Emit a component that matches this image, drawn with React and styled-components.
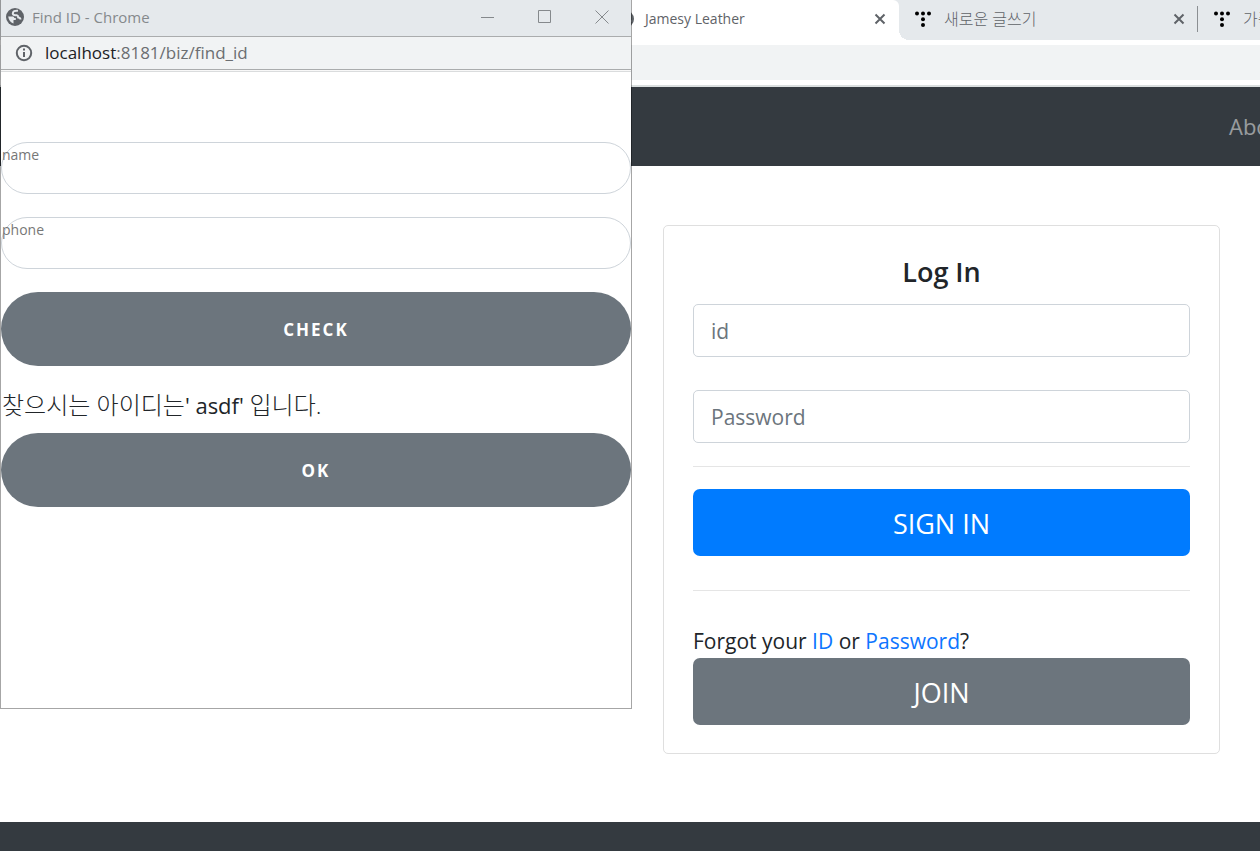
import styled, { createGlobalStyle } from 'styled-components';

const GlobalStyle = createGlobalStyle`
  *, *::before, *::after {
    box-sizing: border-box;
  }
  body {
    margin: 0;
    background: #fff;
    color: #212529;
    font-family: 'Open Sans', 'Noto Sans CJK KR', sans-serif;
    font-size: 21px;
    line-height: 33px;
  }
  button, input {
    font-family: inherit;
  }
  a {
    color: #0d75ff;
    text-decoration: none;
  }
`;

const Desktop = styled.div`
  position: relative;
  min-height: 100vh;
  overflow: hidden;
  display: flex;
  flex-direction: column;
`;

const TabStrip = styled.div`
  height: 40px;
  padding-left: 600px;
  display: flex;
  overflow: hidden;
  background: #e5e9ec;
`;

const Tab = styled.div`
  position: relative;
  flex: 0 0 299px;
  padding: 0 0 2px 16px;
  display: flex;
  align-items: center;
  line-height: 24px;
  color: #5f6368;
  background: ${({ $active }) => ($active ? '#fff' : 'none')};
  border-top-right-radius: ${({ $active }) => ($active ? '6px' : '0')};

  &::after {
    content: '';
    display: ${({ $active }) => ($active ? 'block' : 'none')};
    position: absolute;
    left: 100%;
    bottom: 0;
    width: 10px;
    height: 10px;
    background: radial-gradient(circle at 100% 0, transparent 10px, #fff 10px);
  }
  svg {
    flex: none;
  }
`;

const TabTitle = styled.span`
  flex: 1;
  margin-left: 11px;
  white-space: nowrap;
  font-size: 14px;

  &:lang(ko) {
    font-size: 16px;
    font-weight: 300;
  }
`;

const IconButton = styled.button`
  flex: none;
  width: ${({ $width }) => $width}px;
  height: 16px;
  padding: 0;
  border: 0;
  background: none;
  color: inherit;
  display: flex;
  align-items: center;
  justify-content: center;
`;

const TabDivider = styled.span`
  width: 1px;
  height: 26px;
  margin-left: 10px;
  background: ${({ $hidden }) => ($hidden ? 'transparent' : '#8b8f92')};
`;

const Toolbar = styled.div`
  height: 47px;
  padding: 5px 0;
  border-bottom: 2px solid #dadfdf;
`;

const AddressField = styled.div`
  height: 35px;
  background: #f1f3f4;
`;

const Nav = styled.nav`
  height: 79px;
  display: flex;
  align-items: center;
  justify-content: flex-end;
  background: #343a40;

  a {
    width: 31px;
    min-width: 0;
    white-space: nowrap;
    font-size: 22px;
    color: rgba(255, 255, 255, 0.5);
  }
`;

const Main = styled.main`
  flex: 1;
  padding: 59px 40px 68px 663px;
`;

const Card = styled.form`
  padding: 29px 29px 28px;
  border: 1px solid #dfdfdf;
  border-radius: 5px;
  display: flex;
  flex-direction: column;
`;

const CardTitle = styled.h1`
  margin: 0 0 15px;
  font-size: 27px;
  line-height: 34px;
  font-weight: 600;
  text-align: center;
`;

const CardInput = styled.input`
  width: 100%;
  height: 53px;
  padding: 0 17px;
  border: 1px solid #ced4da;
  border-radius: 5px;
  font-size: 21px;
  color: #495057;

  & + & {
    margin-top: 33px;
  }
  &::placeholder {
    color: #6c757d;
    opacity: 1;
  }
`;

const Rule = styled.hr`
  width: 100%;
  height: 1px;
  margin: ${({ $wide }) => ($wide ? '34px 0' : '23px 0 22px')};
  border: 0;
  background: #e5e5e5;
`;

const BlockButton = styled.button`
  height: 67px;
  padding: 2px 0 0;
  border: 0;
  border-radius: 7px;
  font-size: 27px;
  color: #fff;
  background: ${({ $primary }) => ($primary ? '#007bff' : '#6c757d')};
`;

const Forgot = styled.p`
  margin: 0;
`;

const Footer = styled.footer`
  height: 29px;
  background: #343a40;
`;

const Popup = styled.section`
  position: absolute;
  top: 0;
  left: 0;
  width: 632px;
  height: 709px;
  border: 1px solid rgba(0, 0, 0, 0.35);
  border-top: 0;
  background: #fff;
  background-clip: padding-box;
`;

const TitleBar = styled.header`
  height: 37px;
  padding: 0 15px 2px 5px;
  border-bottom: 1px solid #aaacad;
  display: flex;
  align-items: center;
  background: #e5e9ec;
  color: #85898c;

  > svg {
    color: #5f6368;
  }
`;

const WindowTitle = styled.span`
  flex: 1;
  margin-left: 8px;
  font-size: 15px;
  line-height: 24px;
`;

const Controls = styled.div`
  display: flex;
  gap: 29px;
`;

const UrlBar = styled.div`
  height: 35px;
  padding: 0 14px 2px;
  border-bottom: 1px solid #dadcdd;
  box-shadow: inset 0 -1px #f8f8f8, inset 0 -2px #aaacad;
  display: flex;
  align-items: center;
  gap: 12px;
  background: #f1f3f4;
  font-size: 17px;
  line-height: 24px;
  color: #6b6e71;

  b {
    font-weight: 400;
    color: #202124;
  }
  svg {
    color: #5f6368;
  }
`;

const FindForm = styled.form`
  padding-top: 70px;
  display: flex;
  flex-direction: column;
`;

const Field = styled.div`
  position: relative;
  margin-bottom: 23px;

  label {
    position: absolute;
    top: 1px;
    left: 1px;
    font-size: 14px;
    line-height: 24px;
    color: #777;
  }
  input {
    display: block;
    width: 100%;
    height: 52px;
    padding: 0 26px;
    border: 1px solid #ced4da;
    border-radius: 26px;
    background: none;
    font-size: 15px;
  }
`;

const PillButton = styled.button`
  height: 74px;
  border: 0;
  border-radius: 37px;
  background: #6c757d;
  color: #fff;
  font-size: 17px;
  font-weight: 700;
  letter-spacing: 2px;
`;

const Message = styled.p`
  margin: 22px 0 11px;
  padding-left: 1px;
  line-height: 34px;
  font-size: 24px;
  font-weight: 300;

  span {
    font-size: 22px;
    font-weight: 400;
  }
`;

const GlobeIcon = () => (
  <svg width="18" height="18" viewBox="0 0 18 18" fill="none" stroke="#e5e9ec">
    <circle cx="9" cy="9" r="9" fill="currentColor" stroke="none" />
    <path d="M2.2 8.500H7q1.300 0 1.300 1.500h1.500v2H7.500v3.500Q3 14 2.200 8.500z" fill="#e5e9ec" stroke="none" />
    <path d="M12 2.800Q7 2.200 6.800 5.600q.2 1.600 2.500 1.600h1.500q1.400.2 1.400 2.200 2.300.2 2.300 2.200" strokeWidth="2" />
  </svg>
);

const InfoIcon = () => (
  <svg width="18" height="18" viewBox="0 0 18 18" fill="none" stroke="currentColor" strokeWidth="2">
    <circle cx="9" cy="9" r="7.200" />
    <path d="M9 4.600v2M9 8v5" />
  </svg>
);

const CloseIcon = () => (
  <svg width="12" height="12" viewBox="0 0 12 12" stroke="currentColor" strokeWidth="2">
    <path d="M1.500 1.500l9 9M10.500 1.500l-9 9" />
  </svg>
);

const BlogIcon = () => (
  <svg width="18" height="18" viewBox="0 0 18 18">
    <circle cx="2" cy="3.500" r="2" />
    <circle cx="8" cy="3.500" r="2" />
    <circle cx="14" cy="3.500" r="2" />
    <circle cx="8" cy="9.200" r="2" />
    <circle cx="8" cy="15" r="2" />
  </svg>
);

const tabs = [
  { title: 'Jamesy Leather', active: true, lang: 'en' },
  { title: '새로운 글쓰기', lang: 'ko' },
  { title: '가죽', lang: 'ko' },
];

const App = () => {
  return (
    <Desktop>
      <GlobalStyle />
      <TabStrip>
        {tabs.map(({ title, active, lang }) => (
          <Tab key={title} $active={active}>
            {active ? <GlobeIcon /> : <BlogIcon />}
            <TabTitle lang={lang}>{title}</TabTitle>
            <IconButton type="button" $width={16} aria-label="Close tab">
              <CloseIcon />
            </IconButton>
            <TabDivider $hidden={active} />
          </Tab>
        ))}
      </TabStrip>
      <Toolbar>
        <AddressField />
      </Toolbar>
      <Nav>
        <a href="#about">About</a>
      </Nav>
      <Main>
        <Card>
          <CardTitle>Log In</CardTitle>
          <CardInput type="text" placeholder="id" aria-label="id" />
          <CardInput type="password" placeholder="Password" aria-label="Password" />
          <Rule />
          <BlockButton type="button" $primary>
            SIGN IN
          </BlockButton>
          <Rule $wide />
          <Forgot>
            Forgot your <a href="#find-id">ID</a> or <a href="#find-pw">Password</a>?
          </Forgot>
          <BlockButton type="button">JOIN</BlockButton>
        </Card>
      </Main>
      <Footer />

      {/* Find ID window */}
      <Popup>
        <TitleBar>
          <GlobeIcon />
          <WindowTitle>Find ID - Chrome</WindowTitle>
          <Controls>
            <IconButton type="button" $width={28} aria-label="Minimize">
              <svg width="14" height="14" stroke="currentColor" fill="none">
                <path d="M0 7.500h13" />
              </svg>
            </IconButton>
            <IconButton type="button" $width={28} aria-label="Maximize">
              <svg width="14" height="14" stroke="currentColor" fill="none">
                <path d="M.5 .5h12v12h-12z" />
              </svg>
            </IconButton>
            <IconButton type="button" $width={28} aria-label="Close">
              <svg width="14" height="14" stroke="currentColor" fill="none">
                <path d="M.5 .5l13 13M13.500 .5l-13 13" />
              </svg>
            </IconButton>
          </Controls>
        </TitleBar>
        <UrlBar>
          <InfoIcon />
          <span>
            <b>localhost</b>:8181/biz/find_id
          </span>
        </UrlBar>
        <FindForm>
          <Field>
            <label htmlFor="name">name</label>
            <input id="name" type="text" />
          </Field>
          <Field>
            <label htmlFor="phone">phone</label>
            <input id="phone" type="text" />
          </Field>
          <PillButton type="button">CHECK</PillButton>
          <Message>
            찾으시는 아이디는<span>' asdf' </span>입니다.
          </Message>
          <PillButton type="button">OK</PillButton>
        </FindForm>
      </Popup>
    </Desktop>
  );
};
export default App;
